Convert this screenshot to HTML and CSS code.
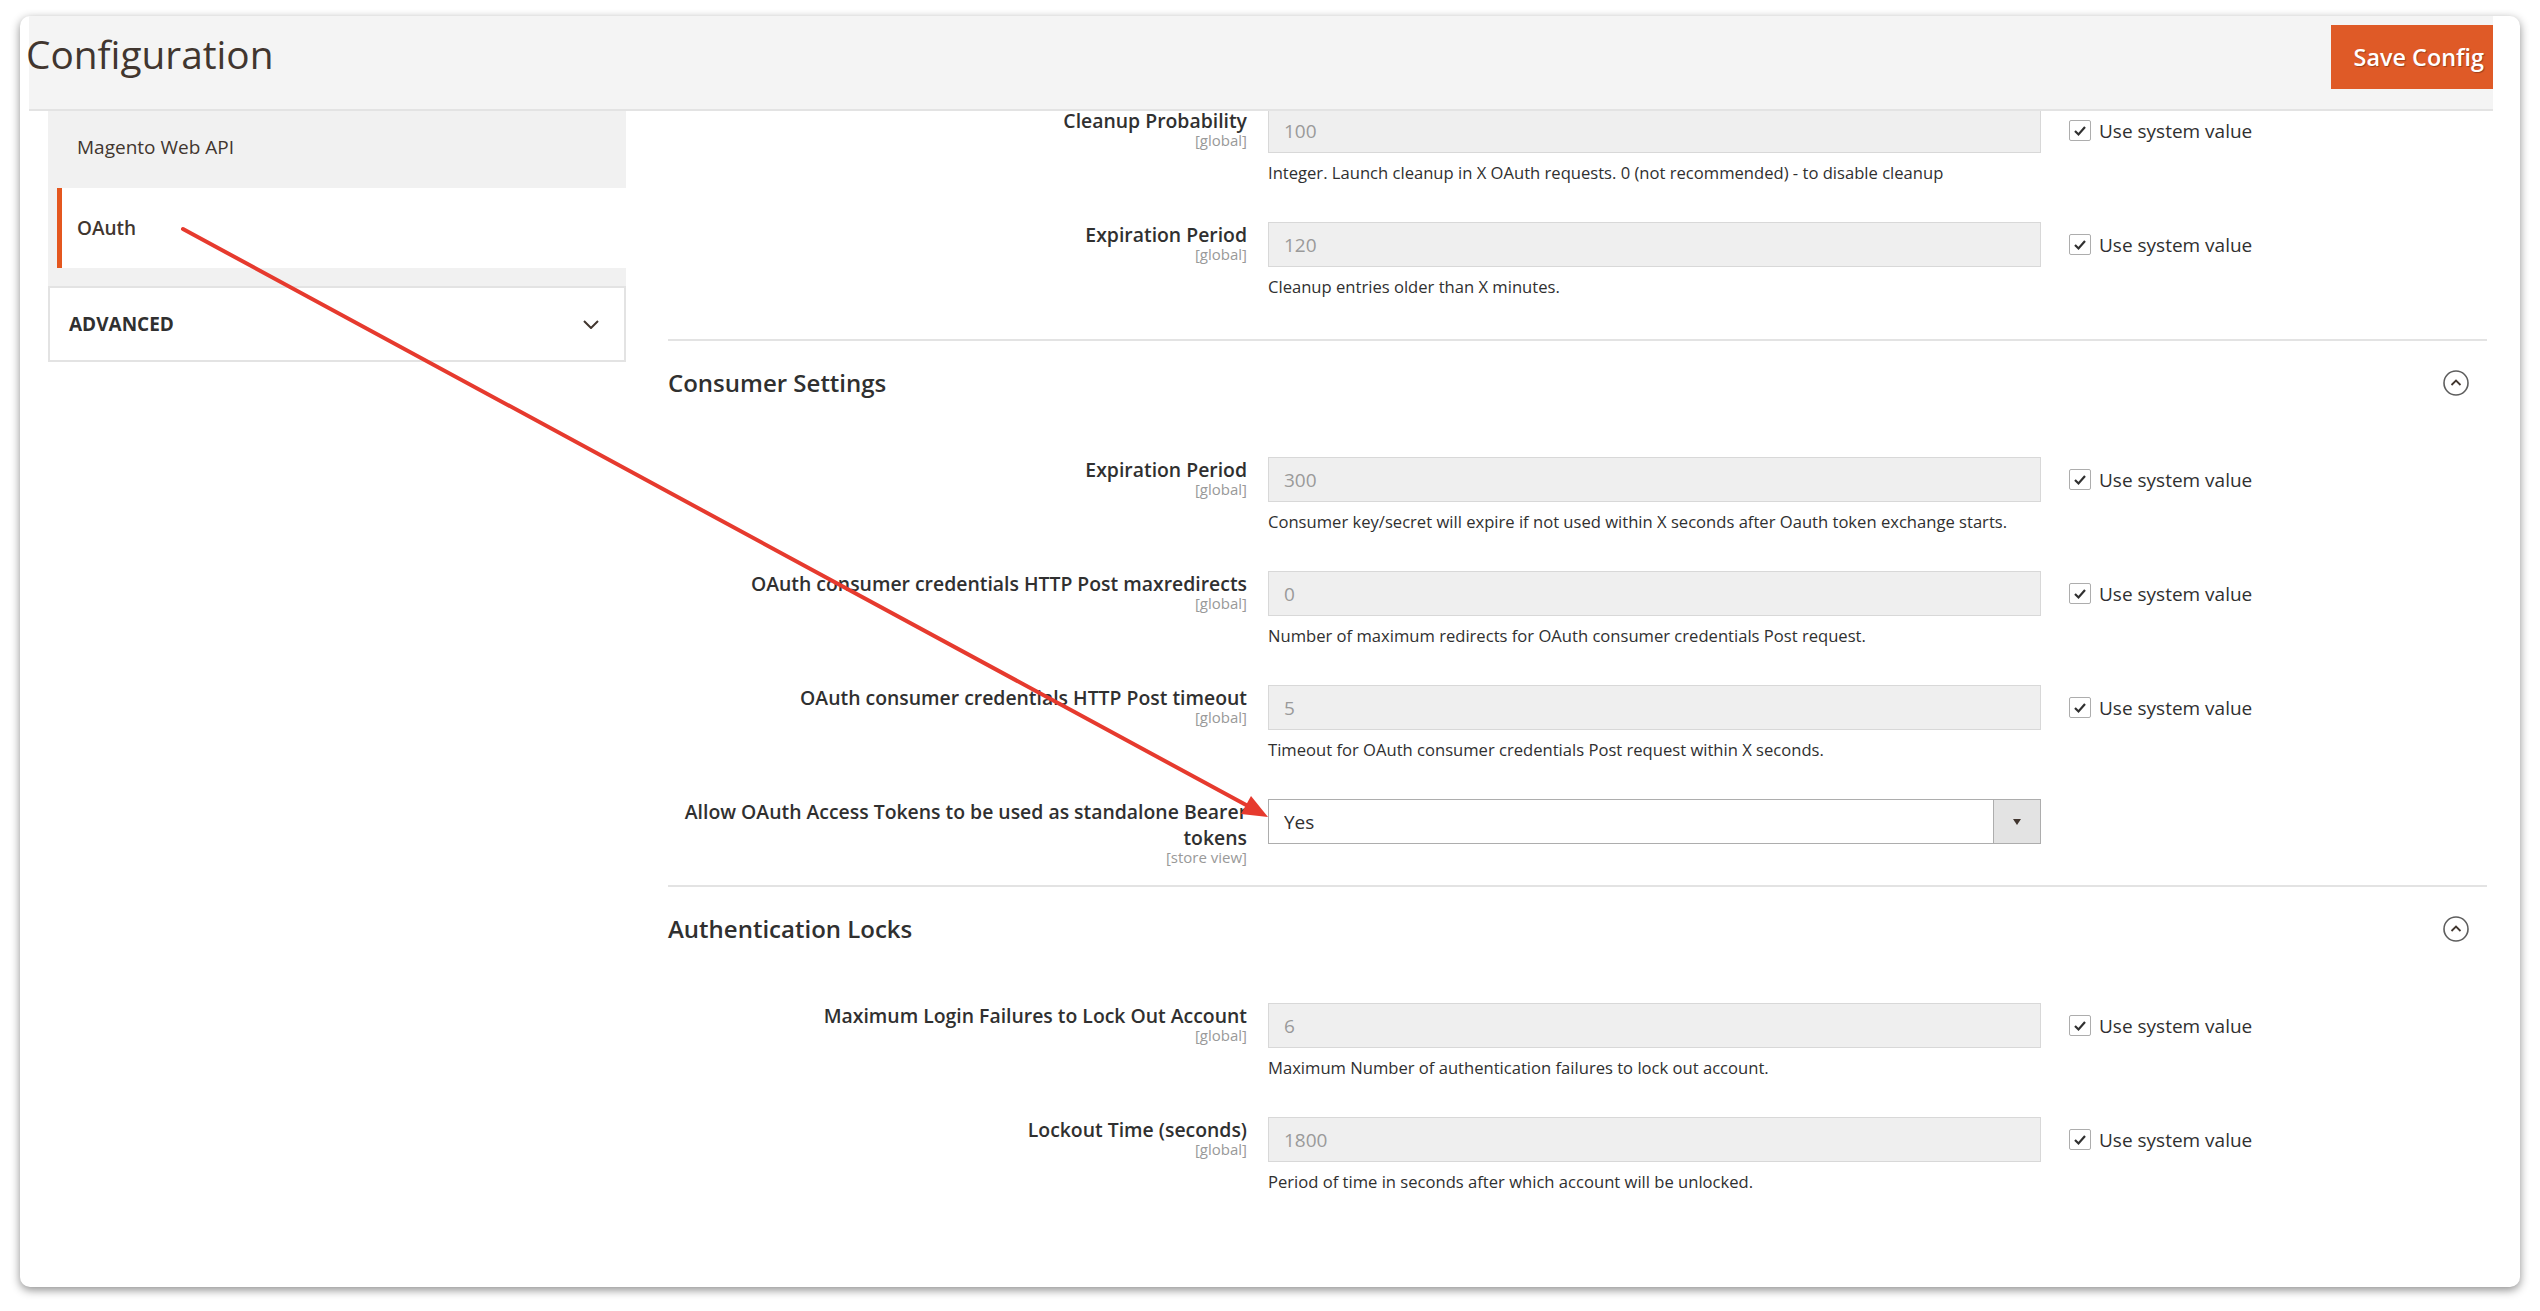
FILE: index.html
```html
<!DOCTYPE html>
<html lang="en">
<head>
  <meta charset="UTF-8">
  <meta name="viewport" content="width=device-width, initial-scale=1.0">
  <title>Configuration</title>
  <link rel="stylesheet" href="styles.css">
</head>
<body>
  <div class="frame">
    <div class="page">
      <header class="page-header">
        <h1 class="page-title">Configuration</h1>
        <button class="btn-primary" type="button">Save Config</button>
      </header>

      <div class="page-main">
        <!-- left config navigation -->
        <aside class="config-nav">
          <ul class="nav-list">
            <li class="nav-item">Magento Web API</li>
            <li class="nav-item current">OAuth</li>
          </ul>
          <div class="nav-section">
            <span>ADVANCED</span>
            <svg class="chevron" width="16" height="9" viewBox="0 0 16 9"><polyline points="1,1 8,8 15,1" fill="none" stroke="#41362f" stroke-width="2"/></svg>
          </div>
        </aside>

        <main class="config-content">
          <div class="fieldset fieldset-cut">
            <div class="row">
              <div class="label">Cleanup Probability<span class="scope">[global]</span></div>
              <div class="control">
                <input class="input-text" type="text" value="100" disabled>
                <p class="note">Integer. Launch cleanup in X OAuth requests. 0 (not recommended) - to disable cleanup</p>
              </div>
              <div class="use-default"><span class="checkbox"><svg width="14" height="12" viewBox="0 0 14 12"><polyline points="2,6 5.5,9.5 12,2" fill="none" stroke="#303030" stroke-width="2.2"/></svg></span>Use system value</div>
            </div>
            <div class="row">
              <div class="label">Expiration Period<span class="scope">[global]</span></div>
              <div class="control">
                <input class="input-text" type="text" value="120" disabled>
                <p class="note">Cleanup entries older than X minutes.</p>
              </div>
              <div class="use-default"><span class="checkbox"><svg width="14" height="12" viewBox="0 0 14 12"><polyline points="2,6 5.5,9.5 12,2" fill="none" stroke="#303030" stroke-width="2.2"/></svg></span>Use system value</div>
            </div>
          </div>

          <section class="section">
            <div class="section-title">
              <span>Consumer Settings</span>
              <svg width="26" height="26" viewBox="0 0 26 26"><circle cx="13" cy="13" r="12" fill="none" stroke="#5e5e5e" stroke-width="1.6"/><polyline points="8.5,15 13,10.5 17.5,15" fill="none" stroke="#41362f" stroke-width="1.8"/></svg>
            </div>
            <div class="fieldset">
              <div class="row">
                <div class="label">Expiration Period<span class="scope">[global]</span></div>
                <div class="control">
                  <input class="input-text" type="text" value="300" disabled>
                  <p class="note">Consumer key/secret will expire if not used within X seconds after Oauth token exchange starts.</p>
                </div>
                <div class="use-default"><span class="checkbox"><svg width="14" height="12" viewBox="0 0 14 12"><polyline points="2,6 5.5,9.5 12,2" fill="none" stroke="#303030" stroke-width="2.2"/></svg></span>Use system value</div>
              </div>
              <div class="row">
                <div class="label">OAuth consumer credentials HTTP Post maxredirects<span class="scope">[global]</span></div>
                <div class="control">
                  <input class="input-text" type="text" value="0" disabled>
                  <p class="note">Number of maximum redirects for OAuth consumer credentials Post request.</p>
                </div>
                <div class="use-default"><span class="checkbox"><svg width="14" height="12" viewBox="0 0 14 12"><polyline points="2,6 5.5,9.5 12,2" fill="none" stroke="#303030" stroke-width="2.2"/></svg></span>Use system value</div>
              </div>
              <div class="row">
                <div class="label">OAuth consumer credentials HTTP Post timeout<span class="scope">[global]</span></div>
                <div class="control">
                  <input class="input-text" type="text" value="5" disabled>
                  <p class="note">Timeout for OAuth consumer credentials Post request within X seconds.</p>
                </div>
                <div class="use-default"><span class="checkbox"><svg width="14" height="12" viewBox="0 0 14 12"><polyline points="2,6 5.5,9.5 12,2" fill="none" stroke="#303030" stroke-width="2.2"/></svg></span>Use system value</div>
              </div>
              <div class="row">
                <div class="label label-wrap">Allow OAuth Access Tokens to be used as standalone Bearer tokens<span class="scope">[store view]</span></div>
                <div class="control">
                  <div class="select-wrap">
                    <select class="select">
                      <option>Yes</option>
                      <option>No</option>
                    </select>
                    <span class="select-arrow"><svg width="10" height="8" viewBox="0 0 10 8"><polygon points="1,1 9,1 5,7" fill="#41362f"/></svg></span>
                  </div>
                </div>
                <div class="use-default"></div>
              </div>
            </div>
          </section>

          <section class="section">
            <div class="section-title">
              <span>Authentication Locks</span>
              <svg width="26" height="26" viewBox="0 0 26 26"><circle cx="13" cy="13" r="12" fill="none" stroke="#5e5e5e" stroke-width="1.6"/><polyline points="8.5,15 13,10.5 17.5,15" fill="none" stroke="#41362f" stroke-width="1.8"/></svg>
            </div>
            <div class="fieldset">
              <div class="row">
                <div class="label">Maximum Login Failures to Lock Out Account<span class="scope">[global]</span></div>
                <div class="control">
                  <input class="input-text" type="text" value="6" disabled>
                  <p class="note">Maximum Number of authentication failures to lock out account.</p>
                </div>
                <div class="use-default"><span class="checkbox"><svg width="14" height="12" viewBox="0 0 14 12"><polyline points="2,6 5.5,9.5 12,2" fill="none" stroke="#303030" stroke-width="2.2"/></svg></span>Use system value</div>
              </div>
              <div class="row">
                <div class="label">Lockout Time (seconds)<span class="scope">[global]</span></div>
                <div class="control">
                  <input class="input-text" type="text" value="1800" disabled>
                  <p class="note">Period of time in seconds after which account will be unlocked.</p>
                </div>
                <div class="use-default"><span class="checkbox"><svg width="14" height="12" viewBox="0 0 14 12"><polyline points="2,6 5.5,9.5 12,2" fill="none" stroke="#303030" stroke-width="2.2"/></svg></span>Use system value</div>
              </div>
            </div>
          </section>
        </main>
      </div>
    </div>
  </div>

  <!-- annotation arrow drawn over the screenshot -->
  <svg class="annotation" width="2540" height="1311" viewBox="0 0 2540 1311">
    <line x1="183" y1="229" x2="1248" y2="806" stroke="#e63a2e" stroke-width="4" stroke-linecap="round"/>
    <polygon points="1268,817 1241,814 1251,796" fill="#e63a2e"/>
  </svg>
</body>
</html>
```

FILE: styles.css
```css
body {
  margin: 0;
  background-color: #ffffff;
  font-family: "Open Sans", "Liberation Sans", sans-serif;
  color: #303030;
  position: relative;
  width: 2540px;
  height: 1311px;
  overflow: hidden;
}

.frame {
  margin: 16px 20px 0 20px;
  height: 1271px;
  background-color: #ffffff;
  border-radius: 10px;
  box-shadow: 0 3px 10px rgba(0, 0, 0, 0.45);
  overflow: hidden;
  padding: 0 27px 0 9px;
  box-sizing: border-box;
}

/* header */
.page-header {
  position: relative;
  z-index: 2;
  height: 93px;
  background-color: #f4f4f4;
  border-bottom: 2px solid #e3e3e3;
  display: flex;
  justify-content: space-between;
  align-items: flex-start;
}

.page-title {
  margin: 12px 0 0 -3px;
  font-size: 38.8px;
  line-height: 52px;
  font-weight: 400;
  color: #41362f;
}

.btn-primary {
  margin-top: 9px;
  height: 64px;
  padding: 0 9px 0 23px;
  border: none;
  background-color: #df5a27;
  color: #ffffff;
  font-family: inherit;
  font-size: 23.4px;
  font-weight: 600;
  text-shadow: 1px 1px 1px rgba(0, 0, 0, 0.3);
}

.page-main {
  display: flex;
  align-items: flex-start;
}

/* navigation */
.config-nav {
  width: 578px;
  margin-left: 19px;
}

.nav-list {
  list-style: none;
  margin: 0;
  padding: 0 0 18px 0;
  background-color: #f1f1f1;
}

.nav-item {
  height: 77px;
  line-height: 72px;
  padding-left: 29px;
  font-size: 19px;
  color: #41362f;
}

.nav-item.current {
  height: 80px;
  line-height: 80px;
  margin-left: 9px;
  padding-left: 15px;
  background-color: #ffffff;
  border-left: 5px solid #e4571f;
  font-weight: 600;
}

.nav-section {
  height: 76px;
  box-sizing: border-box;
  border: 2px solid #e3e3e3;
  background-color: #ffffff;
  display: flex;
  align-items: center;
  justify-content: space-between;
  padding: 0 25px 0 19px;
  font-size: 19px;
  font-weight: 700;
  color: #303030;
}

/* content */
.config-content {
  width: 1819px;
  margin-left: 42px;
}

.fieldset {
  padding: 58px 0 3px 0;
}

.fieldset-cut {
  margin-top: -3px;
  padding-top: 0;
}

.row {
  display: grid;
  grid-template-columns: 600px 773px 1fr;
}

.label {
  padding: 0 21px 12px 0;
  text-align: right;
  font-size: 19.4px;
  line-height: 26px;
  font-weight: 600;
}

.scope {
  display: block;
  margin-top: -2px;
  font-size: 15px;
  line-height: 16px;
  font-weight: 400;
  color: #999999;
}

.control {
  padding-bottom: 38px;
}

.input-text {
  display: block;
  width: 100%;
  height: 45px;
  box-sizing: border-box;
  padding: 0 15px;
  border: 1px solid #d8d8d8;
  background-color: #efefef;
  font-family: inherit;
  font-size: 19px;
  color: #9a9a9a;
}

.note {
  margin: 9px 0 0 0;
  font-size: 16.6px;
  line-height: 22px;
}

.select-wrap {
  position: relative;
  height: 45px;
}

.select {
  appearance: none;
  width: 100%;
  height: 45px;
  box-sizing: border-box;
  padding: 0 15px;
  border: 1px solid #adadad;
  background-color: #ffffff;
  font-family: inherit;
  font-size: 19px;
  color: #303030;
}

.select-arrow {
  position: absolute;
  top: 1px;
  right: 1px;
  bottom: 1px;
  width: 46px;
  background-color: #e3e3e3;
  border-left: 1px solid #adadad;
  display: flex;
  align-items: center;
  justify-content: center;
}

.use-default {
  padding-left: 28px;
  height: 45px;
  display: flex;
  align-items: center;
  gap: 8px;
  font-size: 19px;
}

.checkbox {
  width: 22px;
  height: 21px;
  box-sizing: border-box;
  border: 1px solid #adadad;
  border-radius: 2px;
  background-color: #ffffff;
  display: flex;
  align-items: center;
  justify-content: center;
}

.section {
  border-top: 2px solid #e3e3e3;
}

.section-title {
  padding: 25px 18px 0 0;
  display: flex;
  justify-content: space-between;
  align-items: center;
  font-size: 24px;
  line-height: 33px;
  font-weight: 600;
  color: #303030;
}

.annotation {
  position: absolute;
  left: 0;
  top: 0;
  pointer-events: none;
}
```
